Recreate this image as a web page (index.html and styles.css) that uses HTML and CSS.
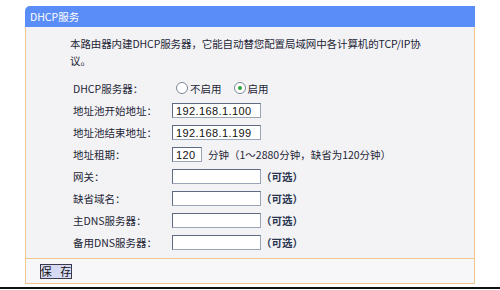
FILE: index.html
```html
<!DOCTYPE html>
<html lang="zh">
<head>
<meta charset="utf-8">
<title>DHCP服务</title>
<link rel="stylesheet" href="styles.css">
</head>
<body>
<div class="page">
  <div class="panel">
    <div class="panel-head">DHCP服务</div>
    <div class="panel-body">
      <p class="intro">本路由器内建DHCP服务器，它能自动替您配置局域网中各计算机的TCP/IP协议。</p>
      <div class="form">
        <div class="row">
          <span class="label">DHCP服务器：</span>
          <span class="radio"></span><span class="opt">不启用</span>
          <span class="radio checked"></span><span class="opt">启用</span>
        </div>
        <div class="row">
          <span class="label">地址池开始地址：</span>
          <span class="input">192.168.1.100</span>
        </div>
        <div class="row">
          <span class="label">地址池结束地址：</span>
          <span class="input">192.168.1.199</span>
        </div>
        <div class="row">
          <span class="label">地址租期：</span>
          <span class="input short">120</span>
          <span class="note">分钟（1～2880分钟，缺省为120分钟）</span>
        </div>
        <div class="row">
          <span class="label">网关：</span>
          <span class="input"></span>
          <span class="hint">（可选）</span>
        </div>
        <div class="row">
          <span class="label">缺省域名：</span>
          <span class="input"></span>
          <span class="hint">（可选）</span>
        </div>
        <div class="row">
          <span class="label">主DNS服务器：</span>
          <span class="input"></span>
          <span class="hint">（可选）</span>
        </div>
        <div class="row">
          <span class="label">备用DNS服务器：</span>
          <span class="input"></span>
          <span class="hint">（可选）</span>
        </div>
      </div>
    </div>
    <div class="panel-foot">
      <span class="btn">保 存</span>
    </div>
  </div>
  <div class="rule"></div>
</div>
</body>
</html>
```

FILE: styles.css
```css
html, body {
  margin: 0;
  padding: 0;
  background: #ffffff;
}
body {
  width: 500px;
  height: 290px;
  overflow: hidden;
  font-family: "Noto Sans CJK SC", "DejaVu Sans", sans-serif;
  font-size: 10.5px;
  color: #1e2536;
}
.page {
  display: flex;
  flex-direction: column;
  padding-top: 6px;
}
.panel {
  width: 450px;
  margin-left: 25px;
  display: flex;
  flex-direction: column;
}
.panel-head {
  height: 21px;
  line-height: 21px;
  background: #5b8df8;
  color: #ffffff;
  padding-left: 5px;
  border-top-left-radius: 5px;
  font-size: 10.5px;
}
.panel-body {
  background: #f3f3f5;
  border-left: 1px solid #efc78c;
  border-right: 1px solid #efc78c;
  border-bottom: 1px solid #efc78c;
  height: 232px;
  padding-left: 44px;
  box-sizing: border-box;
}
.intro {
  margin: 8px 0 0 0;
  width: 362px;
  line-height: 17px;
  letter-spacing: -0.1px;
}
.form {
  margin-top: 8px;
  padding-left: 3px;
  display: flex;
  flex-direction: column;
}
.row {
  height: 22px;
  display: flex;
  align-items: center;
}
.label {
  width: 99px;
  flex: none;
}
.radio {
  width: 10px;
  height: 10px;
  border: 1px solid #7d8899;
  border-radius: 50%;
  background: #ffffff;
  margin-left: 4px;
  display: inline-flex;
  align-items: center;
  justify-content: center;
  box-sizing: content-box;
}
.radio.checked::after {
  content: "";
  width: 4px;
  height: 4px;
  border-radius: 50%;
  background: #2fa13a;
}
.opt {
  margin-left: 2px;
  margin-right: 8px;
}
.input {
  width: 89px;
  height: 15px;
  border: 1px solid #5e6b82;
  border-right-color: #9aa6b8;
  border-bottom-color: #9aa6b8;
  background: #ffffff;
  font-family: "Liberation Sans", sans-serif;
  font-size: 11px;
  line-height: 14px;
  padding-left: 3px;
  box-sizing: border-box;
  color: #111;
  letter-spacing: 0.4px;
}
.input.short {
  width: 30px;
}
.note {
  margin-left: 6px;
}
.hint {
  font-weight: bold;
  color: #2a3550;
}
.panel-foot {
  height: 24px;
  background: #f7f7fa;
  border-left: 1px solid #efc78c;
  border-right: 1px solid #efc78c;
  border-bottom: 1px solid #efc78c;
  display: flex;
  align-items: center;
  padding-left: 14px;
}
.btn {
  width: 32px;
  height: 15px;
  box-sizing: border-box;
  border: 1px solid #3a3a4a;
  background: #d6d9f2;
  display: flex;
  align-items: center;
  justify-content: center;
  font-size: 11px;
  color: #111;
  letter-spacing: 3px;
  padding-left: 3px;
  white-space: pre;
}
.rule {
  margin-top: 3px;
  height: 2px;
  background: #111111;
}
```
